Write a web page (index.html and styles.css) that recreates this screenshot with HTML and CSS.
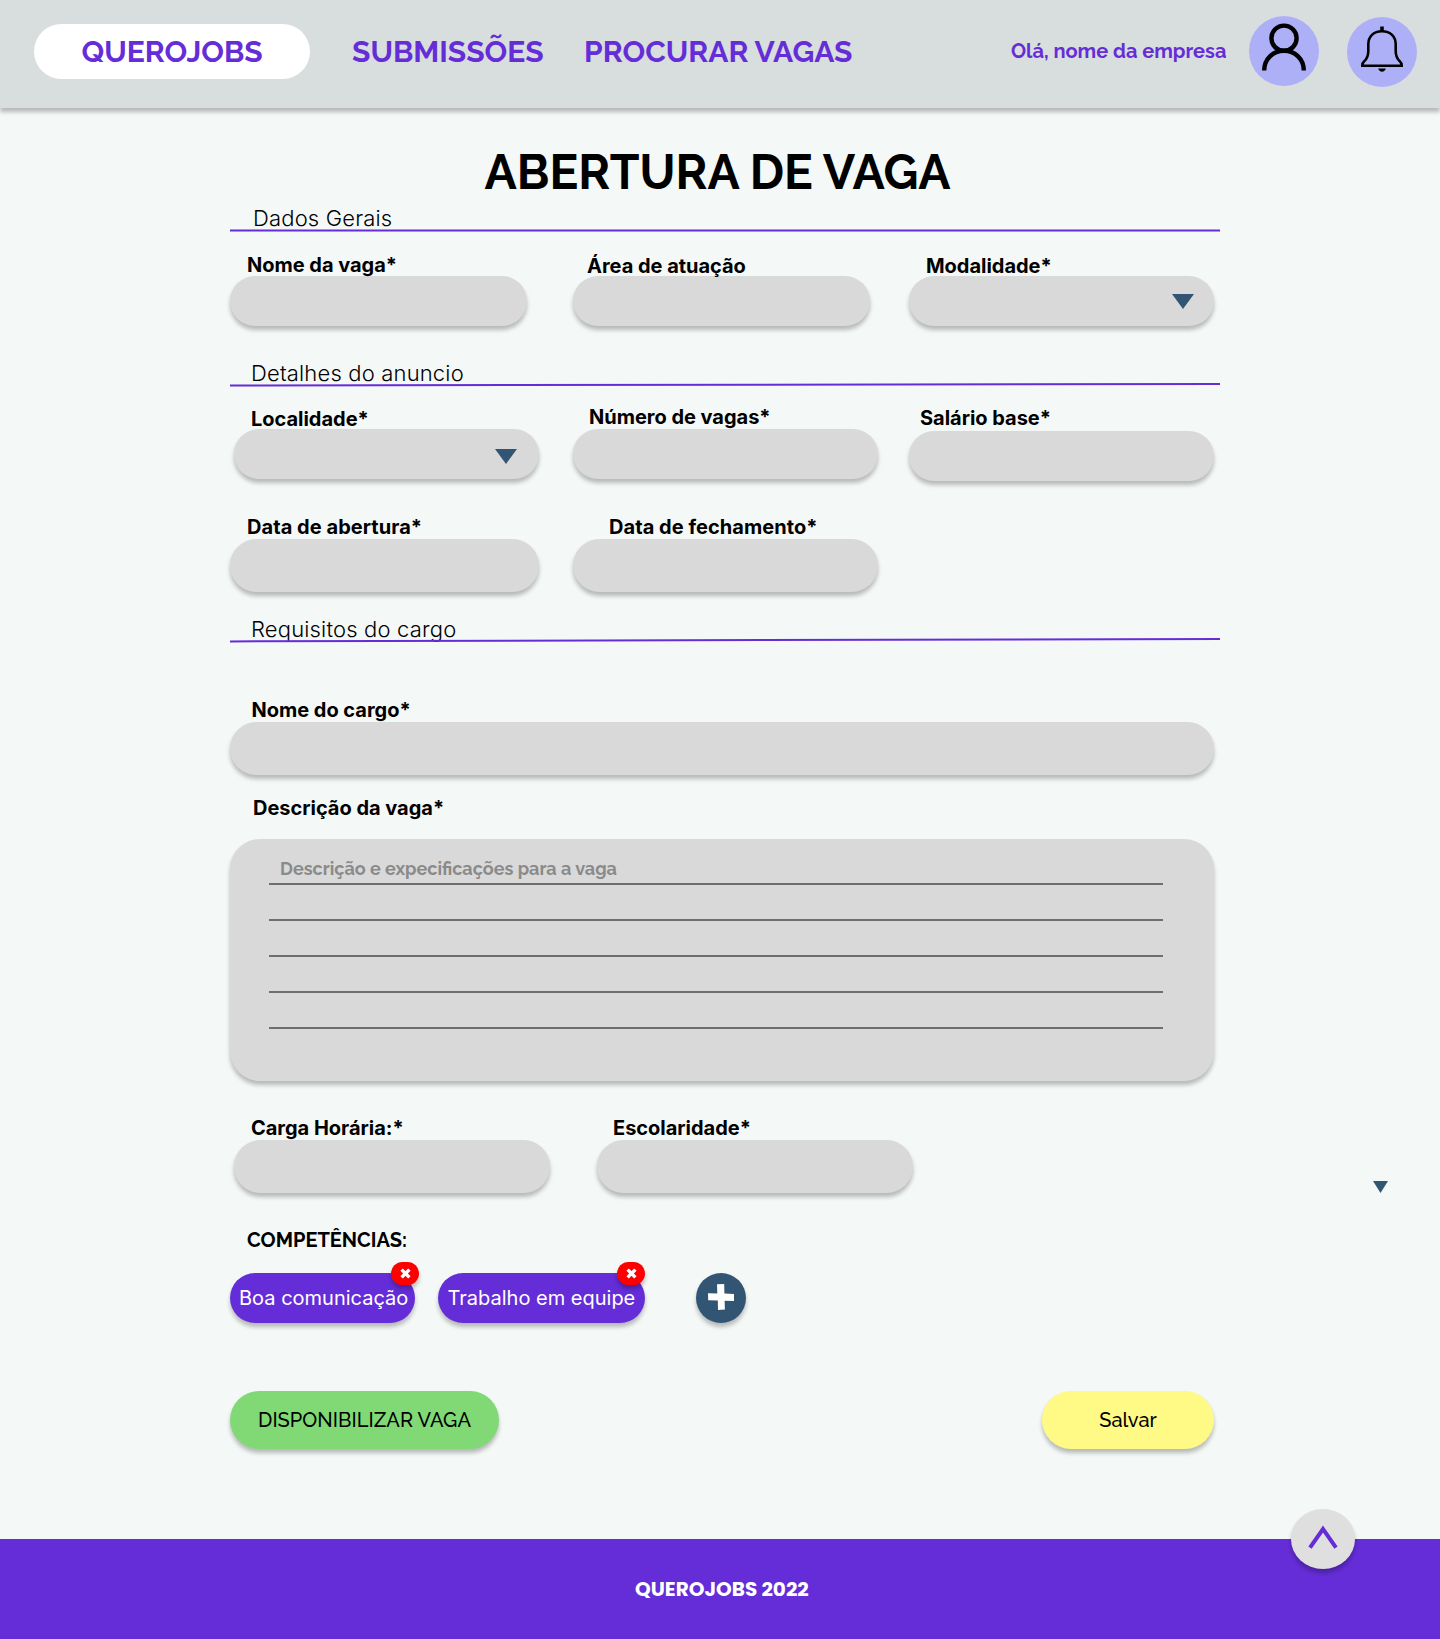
FILE: index.html
```
<!DOCTYPE html>
<html lang="pt-BR">
<head>
<meta charset="utf-8">
<title>QueroJobs - Abertura de vaga</title>
<link rel="stylesheet" href="styles.css">
</head>
<body>
<header class="topbar">
  <nav class="nav">
    <a class="nav-link nav-home">QUEROJOBS</a>
    <a class="nav-link nav-sub">SUBMISSÕES</a>
    <a class="nav-link nav-search">PROCURAR VAGAS</a>
  </nav>
  <div class="account">
    <span class="greeting">Olá, nome da empresa</span>
    <button class="round-icon" aria-label="Perfil">
      <svg width="70" height="70" viewBox="0 0 70 70" fill="none" stroke="#000" stroke-width="4.4">
        <circle cx="35" cy="22.2" r="12.6"/>
        <path d="M15.2 54.5C15.2 43 24 34.8 35 34.8S54.8 43 54.8 54.5"/>
      </svg>
    </button>
    <button class="round-icon round-bell" aria-label="Notificações">
      <svg width="70" height="70" viewBox="0 0 70 70" fill="none" stroke="#000" stroke-width="2.6">
        <path d="M35 9.5v5" stroke-width="3.6"/>
        <path d="M35 14.2C26.500 14.200 21.300 19.500 21.300 27.500V34C21.300 39.500 19.800 42 17.200 44.300 15.700 45.600 15.300 46.800 15.300 48.700H54.700C54.700 46.800 54.300 45.600 52.800 44.300 50.200 42 48.700 39.500 48.700 34V27.500C48.700 19.500 43.500 14.200 35 14.200Z"/>
        <path d="M31.200 51.600H38.800C38.300 53.600 36.900 54.700 35 54.700S31.700 53.600 31.200 51.600Z" fill="#000" stroke="none"/>
      </svg>
    </button>
  </div>
</header>

<main class="page">
  <h1 class="title">ABERTURA DE VAGA</h1>

  <div class="section section-general">
    <h2 class="section-name">Dados Gerais</h2>
    <svg class="rule" width="990" height="6"><path d="M0 3.500H990"/></svg>
  </div>
  <div class="row row-general">
    <div class="field w297"><label class="label in17">Nome da vaga*</label><div class="input"></div></div>
    <div class="field w297"><label class="label in14 down1">Área de atuação</label><div class="input"></div></div>
    <div class="field w305"><label class="label in17 down1">Modalidade*</label>
      <div class="input select"><svg class="caret" width="22" height="15"><path d="M0 0H22L11 15Z"/></svg></div></div>
  </div>

  <div class="section section-details">
    <h2 class="section-name in-less">Detalhes do anuncio</h2>
    <svg class="rule" width="990" height="6"><path d="M0 3.600L990 1.900"/></svg>
  </div>
  <div class="row row-details">
    <div class="field w305"><label class="label in17 down2">Localidade*</label>
      <div class="input select low"><svg class="caret" width="22" height="15"><path d="M0 0H22L11 15Z"/></svg></div></div>
    <div class="field w305"><label class="label in16">Número de vagas*</label><div class="input"></div></div>
    <div class="field w305 field-salary"><label class="label in11">Salário base*</label><div class="input"></div></div>
  </div>
  <div class="row row-dates">
    <div class="field w309"><label class="label in17 wide">Data de abertura*</label><div class="input tall"></div></div>
    <div class="field w305"><label class="label in36 wide">Data de fechamento*</label><div class="input tall"></div></div>
  </div>

  <div class="section section-role">
    <h2 class="section-name in-less">Requisitos do cargo</h2>
    <svg class="rule" width="990" height="6"><path d="M0 3.400L990 1"/></svg>
  </div>
  <div class="field field-role"><label class="label in21">Nome do cargo*</label><div class="input tall"></div></div>
  <div class="field field-desc"><label class="label in23">Descrição da vaga*</label>
    <div class="textarea">
      <div class="line"><span class="placeholder">Descrição e expecificações para a vaga</span></div>
      <div class="line"></div>
      <div class="line"></div>
      <div class="line"></div>
      <div class="line"></div>
    </div>
  </div>
  <div class="row row-load">
    <div class="field w316"><label class="label in17">Carga Horária:*</label><div class="input tall"></div></div>
    <div class="field w316"><label class="label in16">Escolaridade*</label><div class="input tall"></div></div>
    <svg class="caret caret-small" width="15" height="12"><path d="M0 0H15L7.500 12Z"/></svg>
  </div>

  <h3 class="skills-name">COMPETÊNCIAS:</h3>
  <div class="skills">
    <div class="chip chip-a"><span>Boa comunicação</span>
      <button class="remove" aria-label="Remover"><svg width="11" height="11" viewBox="0 0 11 11"><path d="M1.600 1.600L9.400 9.400M9.400 1.600L1.600 9.400"/></svg></button></div>
    <div class="chip chip-b"><span>Trabalho em equipe</span>
      <button class="remove remove-b" aria-label="Remover"><svg width="11" height="11" viewBox="0 0 11 11"><path d="M1.600 1.600L9.400 9.400M9.400 1.600L1.600 9.400"/></svg></button></div>
    <button class="add" aria-label="Adicionar"><svg width="50" height="50" viewBox="0 0 50 50"><path d="M21 11.200L28.200 11 28.400 20.600 38 21V28L28.600 27.800 28.900 36.600 22 37 21.800 27.600 12.200 27.200 12 20.200 21.300 20.400Z" fill="#fff"/></svg></button>
  </div>

  <div class="actions">
    <button class="btn publish">DISPONIBILIZAR VAGA</button>
    <button class="btn save">Salvar</button>
  </div>
</main>

<footer class="footer">
  <span>QUEROJOBS 2022</span>
  <button class="to-top" aria-label="Voltar ao topo"><svg width="64" height="60" viewBox="0 0 64 60"><path d="M19 38.600L32 20 45 38.600"/></svg></button>
</footer>
</body>
</html>
```

FILE: styles.css
```
* { box-sizing: border-box; }
body {
  margin: 0;
  background: #f4f8f7;
  color: #000;
  font-family: Inter, "Liberation Sans", sans-serif;
}
button { border: 0; padding: 0; margin: 0; color: inherit; font: inherit; }
svg { display: block; }
h1, h2, h3 { margin: 0; }

.topbar {
  height: 108px;
  display: flex;
  justify-content: space-between;
  padding: 0 23px 0 34px;
  background: #d8dede;
  box-shadow: 0 4px 4px rgba(0, 0, 0, .25);
  color: #652dd8;
  font-family: Raleway, Lato, sans-serif;
  font-weight: 700;
}
.nav { display: flex; padding-top: 24px; }
.nav-link { height: 55px; line-height: 55px; font-size: 30px; white-space: nowrap; }
.nav-home { width: 276px; padding-left: 47.500px; border-radius: 28px; background: #fff; }
.nav-sub { width: 232px; padding-left: 42px; }
.nav-search { padding-left: 42px; }
.account { display: flex; padding-top: 16px; }
.greeting { width: 238px; line-height: 70px; font-size: 20px; white-space: nowrap; }
.round-icon { width: 70px; height: 70px; border-radius: 50%; background: #aeb0f7; }
.round-bell { margin: 1px 0 0 28px; }

.page { height: 1431px; padding: 37px 220px 0 230px; }
.title {
  height: 56px;
  padding-left: 254.500px;
  font: 700 48px/55px Raleway, Lato, sans-serif;
  white-space: nowrap;
}

.section { height: 31px; }
.section-name {
  height: 28px;
  padding-left: 23px;
  font-size: 22px;
  font-weight: 350;
  line-height: 27px;
  letter-spacing: .17px;
  white-space: nowrap;
}
.section-name.in-less { padding-left: 21px; }
.rule { margin-top: -6px; position: relative; fill: none; stroke: #652dd8; stroke-width: 2; }
.section-general { margin-top: 4px; }
.section-details { margin-top: 34px; }
.section-role { margin-top: 24px; }

.row { display: flex; }
.row-general { margin-top: 17px; gap: 0 46px; }
.row-general .field:last-child { margin-left: -7px; }
.row-details { margin: 14px 0 0 4px; gap: 0 34px; }
.row-details .field-salary { margin-left: -3px; padding-top: 1px; }
.row-dates { margin-top: 34px; gap: 0 34px; }
.row-load { width: 1160px; margin-top: 35px; padding-left: 4px; gap: 0 47px; }

.w297 { width: 297px; }
.w305 { width: 305px; }
.w309 { width: 309px; }
.w316 { width: 316px; }

.label {
  display: block;
  height: 24px;
  font-size: 20px;
  font-weight: 700;
  line-height: 24px;
  letter-spacing: -.02px;
  white-space: nowrap;
}
.label.wide { letter-spacing: .05px; }
.row-general .label { height: 23px; }
.row-details .label { height: 24px; }
.row-details .field-salary .label { height: 25px; }
.in11 { padding-left: 11px; }
.in14 { padding-left: 14px; }
.in16 { padding-left: 16px; }
.in17 { padding-left: 17px; }
.in21 { padding-left: 21.500px; }
.in23 { padding-left: 23px; }
.in36 { padding-left: 36px; }
.down1 { line-height: 26px; }
.down2 { line-height: 28px; }

.input {
  height: 50px;
  border-radius: 25px;
  background: #d9d9d9;
  box-shadow: 0 4px 4px rgba(0, 0, 0, .25);
}
.tall { height: 53px; border-radius: 26.500px; }
.select { display: flex; justify-content: flex-end; padding: 18px 20.500px 0 0; }
.select.low { padding: 20px 22.500px 0 0; }
.caret { fill: #335574; }
.caret-small { margin: 65px 0 0 413px; }

.field-role { width: 984px; margin-top: 51px; }
.field-desc { width: 984px; margin-top: 21px; }
.textarea {
  height: 242px;
  margin-top: 19px;
  padding: 10px 51px 0 39px;
  border-radius: 30px;
  background: #d9d9d9;
  box-shadow: 0 4px 4px rgba(0, 0, 0, .25);
}
.line { height: 36px; border-bottom: 2px solid #6e6e6e; }
.placeholder {
  display: block;
  padding-left: 11px;
  color: #8a8a8a;
  font: 700 18px/40px Raleway, Lato, sans-serif;
  white-space: nowrap;
}

.skills-name {
  margin-top: 35px;
  padding-left: 17px;
  font: 700 20px/24px Raleway, Lato, sans-serif;
  white-space: nowrap;
}
.skills { display: flex; margin-top: 21px; }
.chip {
  position: relative;
  height: 50px;
  border-radius: 25px;
  background: #652dd8;
  box-shadow: 0 4px 4px rgba(0, 0, 0, .25);
  color: #fff;
  font-size: 20px;
  line-height: 50px;
  white-space: nowrap;
}
.chip-a { width: 185px; padding-left: 9px; }
.chip-b { width: 207px; margin-left: 23px; padding-left: 9.500px; }
.remove {
  position: absolute;
  top: -11px;
  right: -4px;
  width: 28px;
  height: 23px;
  display: grid;
  place-items: center;
  border-radius: 11.500px;
  background: #f00;
  box-shadow: 0 4px 4px rgba(0, 0, 0, .25);
}
.remove-b { right: 0; }
.remove path { stroke: #fff; stroke-width: 3.400; }
.add {
  width: 50px;
  height: 50px;
  margin-left: 51px;
  border-radius: 50%;
  background: #335574;
  box-shadow: 0 4px 4px rgba(0, 0, 0, .25);
}

.actions { width: 984px; display: flex; justify-content: space-between; margin-top: 68px; }
.btn {
  height: 58px;
  border-radius: 29px;
  box-shadow: 0 4px 4px rgba(0, 0, 0, .25);
  font: 500 20px/58px Raleway, Lato, sans-serif;
  letter-spacing: .04px;
  white-space: nowrap;
}
.publish { width: 269px; background: #80d974; }
.save { width: 172px; background: #fff985; }

.footer {
  position: relative;
  height: 100px;
  padding-left: 635px;
  background: #652dd8;
  color: #fff;
  font: 700 20px/100px Poppins, "Open Sans", sans-serif;
}
.to-top {
  position: absolute;
  top: -30px;
  right: 85px;
  width: 64px;
  height: 60px;
  border-radius: 50%;
  background: #dfdfdf;
  box-shadow: 0 4px 4px rgba(0, 0, 0, .25);
}
.to-top path { fill: none; stroke: #652dd8; stroke-width: 4; }
```
